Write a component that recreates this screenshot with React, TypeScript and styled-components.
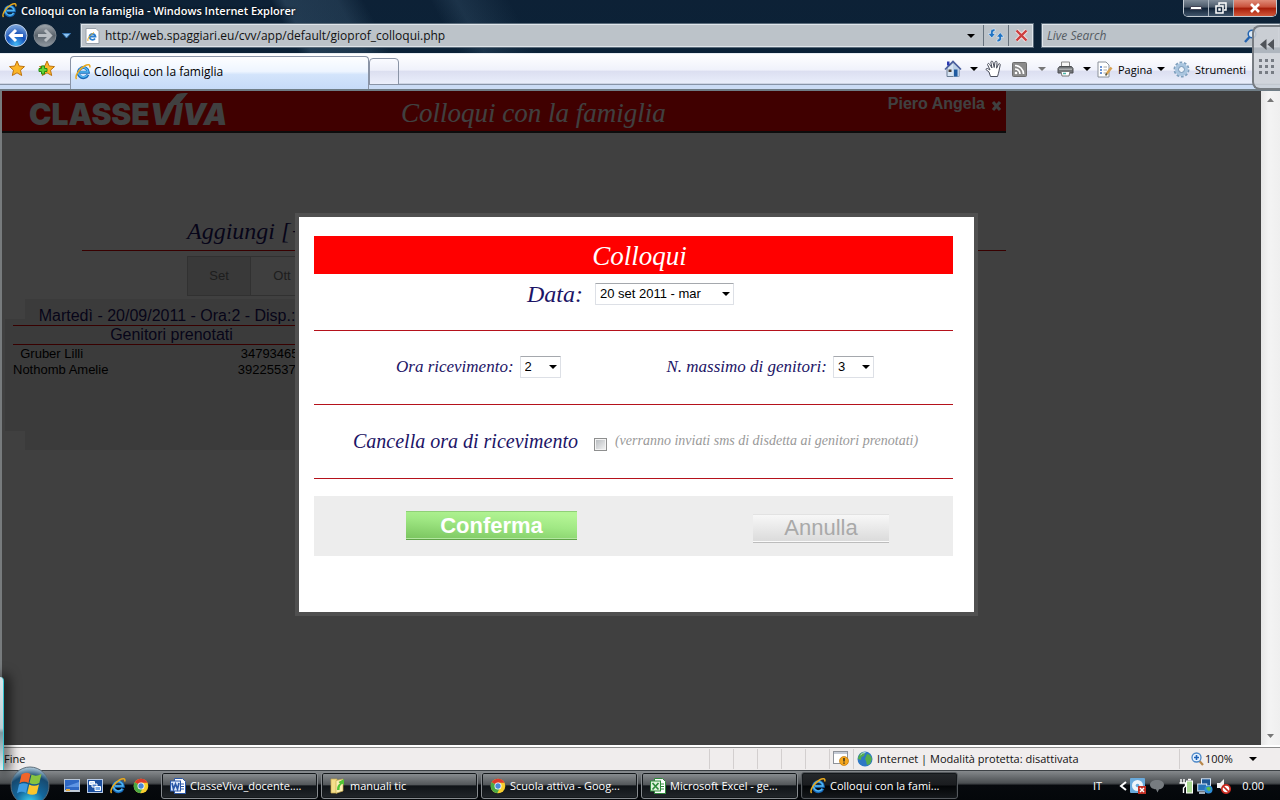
import React from "react";
import styled, { createGlobalStyle } from "styled-components";

const UI = `"Open Sans", "Noto Sans", sans-serif`;
const SANS = `"Liberation Sans", Arial, sans-serif`;
const SCRIPT = `"Monotype Corsiva", "Liberation Serif", serif`;

const GlobalStyle = createGlobalStyle`
  * { box-sizing: border-box; }
  body { margin: 0; background: #404040; font-family: ${UI}; font-size: 11px; overflow: hidden; }
  button, select, input { font: inherit; margin: 0; }
  button { padding: 0; border: 0; background: none; color: inherit; }
  svg { display: block; flex: none; }
  h1, h2, p { margin: 0; font-weight: normal; }
`;

const Desktop = styled.div`
  position: relative;
  display: flex;
  flex-direction: column;
  height: 100vh;
  overflow: hidden;
`;

/* ---------- browser chrome ---------- */

const Chrome = styled.header`
  flex: none;
  background:
    linear-gradient(62deg, transparent 24%, rgba(120, 160, 190, 0.2) 25%, rgba(120, 160, 190, 0.16) 29%, transparent 31%, transparent 36%, rgba(120, 160, 190, 0.14) 38%, transparent 42%),
    linear-gradient(#0d2136, #0a2338);
`;

const TitleBar = styled.div`
  display: flex;
  justify-content: space-between;
  align-items: flex-start;
  height: 22px;
  padding: 0 2px;
  color: #fff;
`;

const WindowTitle = styled.h1`
  display: flex;
  align-items: center;
  gap: 4px;
  height: 20px;
  font-size: 11px;
  font-weight: 600;
  text-shadow: 0 0 3px #000;
`;

const WindowButtons = styled.div`
  display: flex;
  height: 17px;
  margin-right: 1px;
  border: 1px solid #c3cbd3;
  border-top: 0;
  border-radius: 0 0 5px 5px;
  overflow: hidden;
`;

const WindowButton = styled.button<{ $close?: boolean }>`
  display: flex;
  align-items: center;
  justify-content: center;
  width: ${(p) => (p.$close ? 42 : 25)}px;
  border-right: ${(p) => (p.$close ? "0" : "1px solid #aab4be")};
  background: ${(p) =>
    p.$close
      ? "linear-gradient(#e08b78 0%, #c8503a 45%, #a51c08 50%, #d2583a 100%)"
      : "linear-gradient(#7f8b98 0%, #4a5868 45%, #0f2034 50%, #41566c 100%)"};
`;

const NavBar = styled.div`
  display: flex;
  align-items: center;
  gap: 7px;
  height: 31px;
  padding: 0 0 4px 4px;
`;

const NavButtons = styled.div`
  display: flex;
  align-items: center;
  gap: 5px;
  width: 69px;
`;

const Address = styled.div`
  display: flex;
  flex: 1;
  height: 25px;
  border: 1px solid #5a6b7a;
  outline: 1px solid #dfe5ea;
  outline-offset: -2px;
  background: #bcc3c9;
`;

const AddressIcon = styled.span`
  display: flex;
  align-items: center;
  padding-left: 4px;
`;

const TextBox = styled.input<{ $italic?: boolean }>`
  flex: 1;
  min-width: 0;
  padding: 0 5px;
  border: 0;
  outline: 0;
  background: none;
  color: #111;
  font-size: 12px;
  font-style: ${(p) => (p.$italic ? "italic" : "normal")};
  &::placeholder { color: #555c63; opacity: 1; }
`;

const AddressButton = styled.button<{ $line?: boolean }>`
  display: flex;
  align-items: center;
  justify-content: center;
  width: 25px;
  border-left: ${(p) => (p.$line ? "1px solid #66727d" : "0")};
`;

const Search = styled(Address)`
  flex: none;
  width: 239px;
  border-right: 0;
`;

const SearchGlyph = styled.span`
  display: flex;
  align-items: center;
  padding-right: 23px;
`;

const CommandBar = styled.div`
  display: flex;
  height: 38px;
  border-top: 1px solid #e8edf3;
  border-bottom: 2px solid #6f7d86;
  background: linear-gradient(#ffffff 0%, #f0f2fb 45%, #dcdff1 50%, #e9eefb 84%, #8794a8 85%, #8794a8 88%, #cbdcf5 89%);
`;

const Favorites = styled.div`
  display: flex;
  align-items: center;
  gap: 13px;
  width: 70px;
  padding: 0 0 6px 8px;
`;

const Tab = styled.button`
  display: flex;
  align-items: center;
  gap: 3px;
  width: 299px;
  height: 33px;
  margin-top: 2px;
  padding: 0 4px 3px;
  border: 1px solid #8a94a6;
  border-bottom: 0;
  border-radius: 4px 4px 0 0;
  background: linear-gradient(#fdfeff 0%, #eef5ff 45%, #d3e4fb 55%, #c6dbf8 100%);
  color: #000;
  font-size: 12px;
`;

const NewTab = styled.button`
  width: 30px;
  height: 27px;
  margin-top: 4px;
  border: 1px solid #8a94a6;
  border-radius: 4px 4px 0 0;
  background: linear-gradient(#fafbff 0%, #edeff9 45%, #dcdff0 50%, #eceffb 100%);
`;

const Tools = styled.div`
  display: flex;
  align-items: center;
  margin-left: auto;
  padding: 0 34px 5px 0;
`;

const ToolButton = styled.button<{ $width: number }>`
  display: flex;
  align-items: center;
  gap: 5px;
  width: ${(p) => p.$width}px;
  height: 24px;
  white-space: nowrap;
`;

const Gadget = styled.aside`
  position: absolute;
  top: 25px;
  right: 0;
  display: flex;
  flex-direction: column;
  align-items: center;
  gap: 8px;
  width: 28px;
  height: 65px;
  padding-top: 12px;
  border: 2px solid #777c82;
  border-right: 0;
  border-radius: 8px 0 0 8px;
  background: rgba(205, 208, 214, 0.85);
`;

/* ---------- page behind the dialog ---------- */

const Viewport = styled.main`
  position: relative;
  display: flex;
  flex: 1;
  min-height: 0;
  background: #fff;
`;

const Page = styled.div`
  position: relative;
  flex: 1;
  min-width: 0;
  border-left: 2px solid #777b7d;
`;

const ScrollBar = styled.div`
  display: flex;
  flex-direction: column;
  justify-content: space-between;
  align-items: center;
  width: 19px;
  padding: 7px 0;
  background: linear-gradient(90deg, #e6e6e6, #f4f4f4 40%, #efefef);
`;

const Content = styled.div`
  width: 80%;
  max-width: 1004px;
`;

const Banner = styled.div`
  display: flex;
  justify-content: space-between;
  height: 42px;
  border-bottom: 2px solid #333;
  background: #f00;
  color: #fff;
`;

const Logo = styled.div`
  position: relative;
  display: flex;
  align-items: flex-end;
  width: 399px;
  padding-left: 27px;
  font: 900 30px/34px "Inter", ${SANS};
`;

const LogoItalic = styled.span`
  font-style: italic;
`;

const LogoTick = styled.svg`
  position: absolute;
  left: 164px;
  top: 1px;
`;

const BannerTitle = styled.h2`
  flex: 1;
  font: italic 27px/44px ${SCRIPT};
`;

const User = styled.div`
  display: flex;
  gap: 6px;
  padding-right: 4px;
  font: bold 16px/25px ${SANS};
  svg { margin-top: 10px; }
`;

const AddRow = styled.div`
  margin: 80px 0 0 80px;
  padding-left: 105px;
  border-bottom: 1px solid #e00000;
  color: #1c1466;
  font: italic 24px/37px ${SCRIPT};
`;

const Months = styled.div`
  display: flex;
  margin: 5px 0 0 185px;
`;

const Month = styled.button<{ $active?: boolean }>`
  width: 64px;
  height: 40px;
  margin-right: -1px;
  border: 1px solid #c4c4c4;
  background: ${(p) => (p.$active ? "#e2e2e2" : "#fafafa")};
  color: #777;
  font: 13px/16px ${SANS};
`;

const Slot = styled.section`
  width: 360px;
  height: 151px;
  margin: 3px 0 0 3px;
  padding: 8px 0 0 8px;
  background:
    linear-gradient(#ebebeb, #ebebeb) 20px 0 / 100% 100% no-repeat,
    linear-gradient(#ebebeb, #ebebeb) 0 20px / 100% 112px no-repeat;
  color: #1c1466;
`;

const BookingLine = styled.h2`
  width: 317px;
  border-bottom: 1px solid #e00000;
  text-align: center;
  font: 16px/18px ${SANS};
  white-space: nowrap;
`;

const Parents = styled.table`
  width: 300px;
  margin-top: 1px;
  border-collapse: collapse;
  color: #000;
  font: 13px/16px ${SANS};
  td { padding: 0; white-space: pre; }
  td:last-child { text-align: right; }
`;

/* ---------- dialog ---------- */

const Shade = styled.div`
  position: absolute;
  inset: 0;
  display: flex;
  align-items: center;
  justify-content: center;
  padding: 0 0 8px 10px;
  background: rgba(0, 0, 0, 0.75);
`;

const Dialog = styled.form`
  width: 683px;
  padding: 19px 21px 56px 15px;
  border: 4px solid #505050;
  background: #fff;
  color: #1c1466;
`;

const DialogTitle = styled.h2`
  height: 38px;
  padding-left: 12px;
  background: #f00;
  color: #fff;
  text-align: center;
  font: italic 27px/40px ${SCRIPT};
`;

const FormRow = styled.div<{ $height: number }>`
  display: flex;
  justify-content: center;
  height: ${(p) => p.$height}px;
  padding-right: 6px;
  border-bottom: 1px solid #b5121b;
`;

const Field = styled.div<{ $gap?: number }>`
  display: flex;
  align-items: center;
  gap: ${(p) => p.$gap ?? 6}px;
  height: 40px;
`;

const PairRow = styled(FormRow)`
  align-items: center;
  justify-content: space-between;
  padding: 0 79px 0 82px;
`;

const CancelRow = styled(FormRow)`
  align-items: center;
  justify-content: flex-start;
  padding: 0 0 0 39px;
`;

const Label = styled.label<{ $size: number }>`
  font: italic ${(p) => p.$size}px/32px ${SCRIPT};
  white-space: nowrap;
`;

const Note = styled.span`
  color: #999;
  font: italic 14px/32px ${SCRIPT};
  white-space: nowrap;
`;

const SelectBox = styled.span<{ $width: number }>`
  display: grid;
  align-items: center;
  width: ${(p) => p.$width}px;
  > * { grid-area: 1 / 1; }
  > svg { justify-self: end; margin-right: 4px; pointer-events: none; }
`;

const Select = styled.select`
  width: 100%;
  height: 22px;
  padding: 0 4px;
  border: 1px solid #dde0e6;
  border-top-color: #a5a8ad;
  border-radius: 1px;
  appearance: none;
  background: #fff;
  color: #000;
  font: 13px/18px ${SANS};
`;

const Check = styled.input`
  width: 13px;
  height: 13px;
  margin: 6px 0 0 8px;
  appearance: none;
  border: 1px solid #8e8f8f;
  outline: 1px solid #f4f4f4;
  outline-offset: -2px;
  background: linear-gradient(135deg, #b4b8bc, #f6f6f6);
`;

const Actions = styled.div`
  display: flex;
  align-items: center;
  justify-content: space-between;
  height: 60px;
  margin-top: 17px;
  padding: 0 64px 0 92px;
  background: #ededed;
`;

const Action = styled.button<{ $primary?: boolean }>`
  width: ${(p) => (p.$primary ? 171 : 136)}px;
  height: 29px;
  margin-top: ${(p) => (p.$primary ? 0 : 5)}px;
  border-top: 1px solid ${(p) => (p.$primary ? "#8fd077" : "#e2e2e2")};
  border-bottom: 1px solid ${(p) => (p.$primary ? "#5fa348" : "#bcbcbc")};
  box-shadow: inset 0 -1px ${(p) => (p.$primary ? "#b3e8a0" : "#fafafa")};
  background: ${(p) =>
    p.$primary
      ? "linear-gradient(184deg, #b4f595 10%, #a0e884 45%, #79c45e 100%)"
      : "linear-gradient(#f7f7f7, #dadada)"};
  color: ${(p) => (p.$primary ? "#fff" : "#a9a9a9")};
  font: ${(p) => (p.$primary ? "bold" : "normal")} 22px/26px ${SANS};
`;

/* ---------- status bar and task bar ---------- */

const StatusBar = styled.footer`
  display: flex;
  align-items: center;
  flex: none;
  height: 25px;
  padding-left: 4px;
  border-top: 2px solid #fff;
  box-shadow: inset 0 1px #8a8a8a;
  background: #f0eded;
  color: #111;
`;

const StatusText = styled.span`
  flex: 1;
`;

const StatusCell = styled.span<{ $width: number }>`
  display: flex;
  align-items: center;
  gap: 4px;
  width: ${(p) => p.$width}px;
  height: 20px;
  padding-left: 3px;
  border-left: 1px solid #d3cfcf;
  white-space: nowrap;
`;

const ZoomCell = styled(StatusCell)`
  gap: 1px;
  padding: 0 23px 0 11px;
  > svg:last-child { margin-left: auto; }
`;

const TaskBar = styled.nav`
  display: flex;
  align-items: center;
  flex: none;
  height: 30px;
  padding: 0 16px 0 9px;
  border-top: 1px solid #3c4145;
  background: linear-gradient(#85898c 0%, #4a4e51 42%, #06090d 50%, #04070a 100%);
  color: #fff;
`;

const Start = styled.button`
  width: 42px;
  height: 30px;
  svg { margin-top: -5px; }
`;

const Quick = styled.div`
  display: flex;
  align-items: center;
  gap: 7px;
  width: 110px;
  padding-left: 13px;
`;

const Tasks = styled.div`
  display: flex;
  flex: 1;
  gap: 3px;
`;

const Task = styled.button<{ $active?: boolean }>`
  display: flex;
  align-items: center;
  gap: 4px;
  width: 157px;
  height: 27px;
  padding: 0 8px;
  border: 1px solid ${(p) => (p.$active ? "#55595d" : "#868a8e")};
  border-radius: 3px;
  box-shadow: 0 0 0 1px #14181b inset;
  background: ${(p) =>
    p.$active
      ? "linear-gradient(#25282b 0%, #1a1c1f 48%, #030507 52%, #15181b 100%)"
      : "linear-gradient(#8c9093 0%, #55595c 46%, #101418 52%, #22262a 100%)"};
  white-space: nowrap;
`;

const Tray = styled.div`
  display: flex;
  align-items: center;
  gap: 3px;
`;

const TrayGroup = styled(Tray)`
  margin-right: 11px;
`;

const Clock = styled.span`
  width: 30px;
  text-align: right;
`;

const Language = styled.span`
  width: 23px;
`;

const SideSliver = styled.div`
  position: absolute;
  left: 0;
  bottom: 30px;
  width: 4px;
  height: 93px;
  border-right: 1px solid #35c3cf;
  border-radius: 0 4px 0 0;
  background: linear-gradient(#d9e6ea, #bccdd3 55%, #7d979f 60%, #d7eef2);
  box-shadow: 2px 0 12px 3px rgba(0, 0, 0, 0.7);
`;

/* ---------- icons ---------- */

const IE = ({ size = 16 }: { size?: number }) => (
  <svg width={size} height={size} viewBox="0 0 16 16" fill="none">
    <path d="M12.9 10.6A5 5 0 1 1 13.3 8.3H5" stroke="#1668b8" strokeWidth="3" />
    <path d="M12.3 10.8A4.7 4.7 0 1 1 13 8H5" stroke="#53b6f0" strokeWidth="1.5" />
    <path d="M1.6 15C-.7 12.400 4 5 9.500 2 13 0 15.800.4 14.600 3.600" stroke="#e9a91c" strokeWidth="1.500" />
  </svg>
);

const Caret = ({ color = "#000" }: { color?: string }) => (
  <svg width="8" height="4" viewBox="0 0 8 4"><path d="M0 0h8L4 4z" fill={color} /></svg>
);

const Orb = ({ forward }: { forward?: boolean }) => (
  <svg width="24" height="25" viewBox="0 0 24 25">
    <defs>
      <radialGradient id="orbBlue" cx=".5" cy=".9" r=".8">
        <stop offset="0" stopColor="#43b9f5" /><stop offset=".55" stopColor="#1550b8" /><stop offset="1" stopColor="#6e9ad8" />
      </radialGradient>
      <linearGradient id="orbGrey" x1="0" y1="0" x2="0" y2="1">
        <stop offset="0" stopColor="#a3a9af" /><stop offset=".5" stopColor="#5a636c" /><stop offset="1" stopColor="#929aa2" />
      </linearGradient>
    </defs>
    <circle cx="12" cy="12.500" r="11" fill={forward ? "url(#orbGrey)" : "url(#orbBlue)"} stroke={forward ? "#7e8790" : "#c2d4ea"} />
    <path
      d={forward ? "M5 12.500h12M12 7l5.500 5.500L12 18" : "M19 12.500H7M12 7l-5.500 5.500L12 18"}
      stroke={forward ? "#b9bec3" : "#fff"} strokeWidth="3" fill="none"
    />
  </svg>
);

const Star = ({ plus }: { plus?: boolean }) => (
  <svg width="17" height="17" viewBox="0 0 17 17">
    <path d="M9 1l2.200 5 5.300.600-4 3.600 1.200 5.300L9 12.800l-4.700 2.700 1.200-5.300-4-3.600 5.300-.600z" fill="#fbb527" stroke="#bf7410" />
    {plus && <path d="M3.500 6H6.500V8.500H9V11.500H6.500V14H3.500V11.500H1V8.500h2.500z" fill="#62d435" stroke="#258a14" />}
  </svg>
);

const Home = () => (
  <svg width="18" height="18" viewBox="0 0 18 18">
    <path d="M3 8v8.500h12V8L9 2.500z" fill="#d5e3f2" stroke="#6a7d94" />
    <path d="M9 3l6 5v8.500H9z" fill="#bcd0e6" />
    <path d="M1 9.500L9 1.500l8 8" fill="none" stroke="#4a5f9e" strokeWidth="1.700" />
    <path d="M3 1.500h2.500v4H3z" fill="#2c3bb0" />
    <path d="M10 9.500h3.500v7H10z" fill="#1f5aa0" />
    <path d="M4.500 9.500h3V12h-3z" fill="#4a4038" />
  </svg>
);

const Hand = () => (
  <svg width="17" height="18" viewBox="0 0 17 18">
    <path d="M5.500 16.500L4 12 .9 9.500c.3-1.300 1.500-1.400 2.800-.3L5 10 2.500 4.500C3 3 4 3.200 4.500 4.200L7 8 5.800 2C6.500.7 7.500.8 8 2.200L9.200 7.500 10 2c.6-1.100 1.800-1 2 .4l-.4 5.800L13.500 4c.9-.8 1.900-.2 1.700 1L14 11c-.3 2-1 3.500-1.500 5.500z" fill="#fff" stroke="#4b4f5c" />
  </svg>
);

const Feed = () => (
  <svg width="15" height="15" viewBox="0 0 15 15" fill="none">
    <rect x=".5" y=".5" width="14" height="14" rx="1" fill="#8b8b8b" stroke="#6d6d6d" />
    <path d="M3 7a5 5 0 0 1 5 5M3 3.500A8.500 8.500 0 0 1 11.500 12" stroke="#fff" strokeWidth="1.700" />
    <circle cx="4" cy="11" r="1.300" fill="#fff" />
  </svg>
);

const Printer = () => (
  <svg width="17" height="16" viewBox="0 0 17 16">
    <path d="M4.500 1h8v5h-8z" fill="#f7f7f7" stroke="#888" />
    <path d="M2.500 5.500h12l1.500 2v4.500H1V7.500z" fill="#707376" stroke="#4c4f52" />
    <path d="M2 7.500h13V9H2z" fill="#a9acae" />
    <path d="M4 10.500h9l-1 4.500H5z" fill="#fff" stroke="#777" />
    <path d="M6 12.500h3" stroke="#48b2a8" strokeWidth="1.500" />
  </svg>
);

const PageIcon = () => (
  <svg width="16" height="17" viewBox="0 0 16 17">
    <path d="M1 1h8l3 3v12H1z" fill="#fff" stroke="#8a9099" />
    <path d="M3 6h2M3 9h2M3 12h2" stroke="#3c72c8" strokeWidth="1.500" />
    <path d="M6.500 6H10M6.500 9H10M6.500 12H9" stroke="#a8a8a8" />
    <path d="M14.500 6.500L9.500 13" stroke="#d8a250" strokeWidth="2.500" />
    <path d="M9.800 12.500l-1.200 2" stroke="#554" strokeWidth="1.500" />
  </svg>
);

const Gear = () => (
  <svg width="17" height="17" viewBox="0 0 17 17" fill="none">
    <circle cx="8.500" cy="8.500" r="7" stroke="#7e9fbd" strokeWidth="2" strokeDasharray="2.700 1.700" />
    <circle cx="8.500" cy="8.500" r="4.800" stroke="#a9c5df" strokeWidth="3.400" />
    <circle cx="8.500" cy="8.500" r="3" stroke="#6e92b4" fill="#eef3fa" />
  </svg>
);

const Refresh = () => (
  <svg width="16" height="15" viewBox="0 0 16 15" fill="#1f73c2" stroke="#eef4fa" strokeWidth=".6">
    <path d="M2.500 5.500V4C2.500 2 4 .8 7 .8v2.500c-1.300 0-1.900.3-1.900 1.200v1H7.500L3.800 10 0 5.500z" />
    <path d="M13.500 9v1.500c0 2-1.500 3.500-4.500 3.500v-2.500c1.300 0 1.900-.5 1.900-1.400V9H8.500l3.700-4.500L16 9z" />
  </svg>
);

const Stop = () => (
  <svg width="13" height="13" viewBox="0 0 13 13">
    <path d="M1.500 1.500l10 10M11.500 1.500l-10 10" stroke="#f6e4e4" strokeWidth="4" />
    <path d="M1.500 1.500l10 10M11.500 1.500l-10 10" stroke="#cc3f3f" strokeWidth="2.400" />
  </svg>
);

const Lens = ({ plus }: { plus?: boolean }) => (
  <svg width="13" height="14" viewBox="0 0 13 14" fill="none">
    {plus ? (
      <>
        <path d="M8 8.500l4 4.500" stroke="#b8874a" strokeWidth="2.200" />
        <circle cx="5.500" cy="5.500" r="4.500" fill="#e7f3ff" stroke="#4d88c8" strokeWidth="1.300" />
        <path d="M5.500 3v5M3 5.500h5" stroke="#1e62b8" strokeWidth="1.600" />
      </>
    ) : (
      <>
        <path d="M5.500 8L1 13" stroke="#2464b0" strokeWidth="2.400" />
        <circle cx="8" cy="5" r="3.800" fill="#dcebf8" stroke="#2464b0" strokeWidth="1.500" />
      </>
    )}
  </svg>
);

const StartLogo = () => (
  <svg width="42" height="40" viewBox="0 0 42 40">
    <defs>
      <radialGradient id="startOrb" cx=".5" cy=".95" r=".95">
        <stop offset="0" stopColor="#3fd6f5" /><stop offset=".4" stopColor="#14679c" /><stop offset=".75" stopColor="#174a70" /><stop offset="1" stopColor="#b9d2e2" />
      </radialGradient>
    </defs>
    <circle cx="21" cy="20" r="19" fill="url(#startOrb)" stroke="#5c6c78" />
    <path d="M12.500 8.500q4.500-3 9-.5l-2 9q-4.500-2.500-9 .2z" fill="#f0652a" />
    <path d="M22.500 8.500q4.500 2.500 10-.5l-2.200 9q-5 2.500-9.800 0z" fill="#86c440" />
    <path d="M10 18.500q4.500-2.600 9-.2l-2 8.700q-4.500-2.500-9 .3z" fill="#3f9be0" />
    <path d="M20.200 18.500q5 2.500 9.800 0l-2.200 9q-4.500 2.500-9.600 0z" fill="#fbc62c" />
  </svg>
);

const DesktopIcon = () => (
  <svg width="16" height="14" viewBox="0 0 16 14">
    <rect x=".5" y=".5" width="15" height="12" fill="#2f68c4" stroke="#b7c4d4" />
    <path d="M1 8l14-5v5z" fill="#5f95e4" />
    <path d="M1 11h14v1.500H1z" fill="#c5ced8" />
    <path d="M2 10h4v2H2z" fill="#e5ad45" />
  </svg>
);

const SwitchIcon = () => (
  <svg width="16" height="14" viewBox="0 0 16 14">
    <rect x=".5" y=".5" width="15" height="13" fill="#1c4f9e" stroke="#b7c9e4" />
    <path d="M2.500 2.500h5v3h-5z" fill="#cfe2fa" stroke="#fff" />
    <path d="M5 5h5v3H5z" fill="#4c80cc" stroke="#fff" />
    <path d="M8 7.500h5.500v4H8z" fill="#7faee8" stroke="#fff" />
  </svg>
);

const ChromeIcon = () => (
  <svg width="16" height="16" viewBox="0 0 16 16">
    <circle cx="8" cy="8" r="7.300" fill="#f8ce2e" />
    <path d="M8 8L1.700 4.300A7.300 7.300 0 0 1 14.500 4.800H8z" fill="#dc3a2c" />
    <path d="M8 8L1.700 4.300A7.300 7.300 0 0 0 7.200 15.300L10 9.500z" fill="#4aa845" />
    <circle cx="8" cy="8" r="3.500" fill="#fff" />
    <circle cx="8" cy="8" r="2.700" fill="#4a87d8" />
  </svg>
);

const OfficeIcon = ({ kind }: { kind: "W" | "X" }) => {
  const c = kind === "W" ? "#2a57a8" : "#2e8a3a";
  return (
    <svg width="16" height="16" viewBox="0 0 16 16" fill="none">
      <path d="M4.500.5h8l3 3v12h-11z" fill="#fff" stroke={c} />
      <path d="M11 6h3M11 8.500h3M11 11h3" stroke={c} />
      <rect x=".5" y="3" width="10" height="10" fill={kind === "W" ? "#dbe7fb" : "#e0f3dc"} stroke={c} />
      <path d={kind === "W" ? "M2 5l1.500 6L5.500 6l2 5L9 5" : "M2.500 5l6 6.500M8.500 5l-6 6.500"} stroke={c} strokeWidth="1.700" />
    </svg>
  );
};

const FolderIcon = () => (
  <svg width="16" height="17" viewBox="0 0 16 17">
    <path d="M1 2h6v14H1z" fill="#f4df8a" stroke="#c8a94a" strokeWidth=".7" />
    <path d="M6 3.500l7-1.500v12l-7 2.300z" fill="#fbf0b4" stroke="#c8a94a" strokeWidth=".7" />
    <path d="M7 13c0-4 1-5.500 3-6.500L8.500 5 14 2v6l-1.500-1.200C10 8 9.500 10 9.500 13z" fill="#52c436" />
  </svg>
);

const Globe = () => (
  <svg width="16" height="16" viewBox="0 0 16 16">
    <circle cx="8" cy="8" r="7.500" fill="#2e78c4" />
    <path d="M3 3c2-2 4-1.500 5-1L7 5 4.500 6 4 9 1 8c0-2 1-4 2-5zM10 3c3 0 4.500 3 5 5l-2 5-3 1-1-4-1-2z" fill="#55ad4c" />
    <path d="M3.500 4a6 6 0 0 1 5-2.500" stroke="#c4e4fa" fill="none" />
  </svg>
);

const Blocked = () => (
  <svg width="16" height="15" viewBox="0 0 16 15">
    <rect x=".5" y=".5" width="14" height="12" fill="#fff" stroke="#8e9299" />
    <path d="M1 1h13v2H1z" fill="#c5cbd6" />
    <circle cx="11" cy="10" r="4.500" fill="#f5a61d" stroke="#c47a0a" strokeWidth=".7" />
    <path d="M11 7v3.500M11 11.500v1.300" stroke="#332" strokeWidth="1.500" />
  </svg>
);

const DiscIcon = () => (
  <svg width="16" height="16" viewBox="0 0 16 16">
    <rect width="15" height="15" rx="1" fill="#69aadc" />
    <circle cx="7.500" cy="7.500" r="5.500" fill="#edf4fa" />
    <circle cx="7.500" cy="7.500" r="1.800" fill="#69aadc" />
    <path d="M8 8h8v8H8z" fill="#c22f24" />
    <path d="M10 10l4 4M14 10l-4 4" stroke="#fff" strokeWidth="1.500" />
  </svg>
);

const Bubble = () => (
  <svg width="16" height="14" viewBox="0 0 16 14">
    <path d="M8 1c4 0 7 2 7 4.700S12.500 10 10 10.300L8.500 13.500 7 10.300C3.500 10 1 8.300 1 5.700S4 1 8 1z" fill="#777c80" />
  </svg>
);

const Power = () => (
  <svg width="15" height="16" viewBox="0 0 15 16" fill="none">
    <path d="M2 1v4M5 1v4M.5 5h6v3L4.500 10v5" stroke="#fff" strokeWidth="1.400" />
    <rect x="7.500" y="3" width="6" height="12" fill="#a9d992" stroke="#fff" />
    <path d="M9 1.500h3" stroke="#fff" strokeWidth="1.500" />
  </svg>
);

const Network = () => (
  <svg width="16" height="16" viewBox="0 0 16 16">
    <rect x="4.500" y=".8" width="9" height="7" fill="#1d5694" stroke="#d7e6f5" />
    <rect x=".7" y="6" width="9" height="7" fill="#2873b8" stroke="#d7e6f5" />
    <path d="M2 15h6" stroke="#d7e6f5" strokeWidth="1.500" />
    <circle cx="11.500" cy="11.500" r="4" fill="#2f8dd8" />
    <path d="M9 10l3-1.500 2 2-2 3z" fill="#5cc04b" />
  </svg>
);

const Mute = () => (
  <svg width="15" height="16" viewBox="0 0 15 16">
    <path d="M1 5h3l4-4v13l-4-4H1z" fill="#f2f2f2" />
    <circle cx="10" cy="11" r="4.200" fill="#fff" stroke="#c8281e" strokeWidth="1.700" />
    <path d="M7 8l6 6" stroke="#c8281e" strokeWidth="1.700" />
  </svg>
);

/* ---------- page ---------- */

const Dropdown = ({ id, width, options }: { id: string; width: number; options: string[] }) => (
  <SelectBox $width={width}>
    <Select id={id}>{options.map((o) => <option key={o}>{o}</option>)}</Select>
    <Caret />
  </SelectBox>
);

const tasks = [
  { label: "ClasseViva_docente....", icon: <OfficeIcon kind="W" /> },
  { label: "manuali tic", icon: <FolderIcon /> },
  { label: "Scuola attiva - Goog...", icon: <ChromeIcon /> },
  { label: "Microsoft Excel - ge...", icon: <OfficeIcon kind="X" /> },
  { label: "Colloqui con la fami...", icon: <IE />, active: true },
];

export default function App() {
  return (
    <Desktop>
      <GlobalStyle />
      <Chrome>
        <TitleBar>
          <WindowTitle><IE size={15} />Colloqui con la famiglia - Windows Internet Explorer</WindowTitle>
          <WindowButtons>
            <WindowButton aria-label="Riduci"><svg width="12" height="4"><path d="M.5.5h11v3H.5z" fill="#fff" stroke="#445" /></svg></WindowButton>
            <WindowButton aria-label="Ripristina">
              <svg width="12" height="12" viewBox="0 0 12 12" fill="none" stroke="#fff" strokeWidth="1.500"><path d="M4 3V1h7v7H9M1 4h7v7H1zM4 7h1v1H4z" /></svg>
            </WindowButton>
            <WindowButton $close aria-label="Chiudi">
              <svg width="12" height="10" viewBox="0 0 12 10"><path d="M2 1l8 8M10 1L2 9" stroke="#fff" strokeWidth="2.600" /></svg>
            </WindowButton>
          </WindowButtons>
        </TitleBar>
        <NavBar>
          <NavButtons>
            <button aria-label="Indietro"><Orb /></button>
            <button aria-label="Avanti"><Orb forward /></button>
            <button aria-label="Pagine recenti"><svg width="9" height="6"><path d="M.5.5h8L4.500 5z" fill="#8cc2ee" stroke="#3a78b4" /></svg></button>
          </NavButtons>
          <Address>
            <AddressIcon>
              <svg width="15" height="16" viewBox="0 0 15 16"><path d="M1 .5h10l3 3v12H1z" fill="#fff" stroke="#99a2ab" /><path d="M10 10.500a3 3 0 1 1 .5-2H5" stroke="#2b7fcf" strokeWidth="1.800" fill="none" /><path d="M3 13c-1-2 2-6 6-8.500" stroke="#e9a91c" fill="none" /></svg>
            </AddressIcon>
            <TextBox aria-label="Indirizzo" defaultValue="http://web.spaggiari.eu/cvv/app/default/gioprof_colloqui.php" />
            <AddressButton aria-label="Mostra indirizzi"><Caret /></AddressButton>
            <AddressButton $line aria-label="Aggiorna"><Refresh /></AddressButton>
            <AddressButton $line aria-label="Interrompi"><Stop /></AddressButton>
          </Address>
          <Search>
            <TextBox $italic aria-label="Cerca" placeholder="Live Search" />
            <SearchGlyph><Lens /></SearchGlyph>
          </Search>
        </NavBar>
        <CommandBar>
          <Favorites>
            <button aria-label="Preferiti"><Star /></button>
            <button aria-label="Aggiungi a Preferiti"><Star plus /></button>
          </Favorites>
          <Tab><IE />Colloqui con la famiglia</Tab>
          <NewTab aria-label="Nuova scheda" />
          <Tools>
            <ToolButton $width={26} aria-label="Pagina iniziale"><Home /></ToolButton>
            <ToolButton $width={15} aria-label="Menu pagina iniziale"><Caret /></ToolButton>
            <ToolButton $width={27} aria-label="Panoramica"><Hand /></ToolButton>
            <ToolButton $width={26} aria-label="Feed"><Feed /></ToolButton>
            <ToolButton $width={19} aria-label="Menu feed"><Caret color="#777" /></ToolButton>
            <ToolButton $width={26} aria-label="Stampa"><Printer /></ToolButton>
            <ToolButton $width={14} aria-label="Menu stampa"><Caret /></ToolButton>
            <ToolButton $width={76}><PageIcon />Pagina<Caret /></ToolButton>
            <ToolButton $width={73}><Gear />Strumenti</ToolButton>
          </Tools>
        </CommandBar>
      </Chrome>

      <Viewport>
        <Page>
          <Content>
            <Banner>
              <Logo>
                CLASSE<LogoItalic>VIVA</LogoItalic>
                <LogoTick width="22" height="14" viewBox="0 0 22 14"><path d="M2 13L11 2q5-1.500 11-1L12 13z" fill="#fff" /></LogoTick>
              </Logo>
              <BannerTitle>Colloqui con la famiglia</BannerTitle>
              <User>
                Piero Angela
                <svg width="11" height="10" viewBox="0 0 11 10"><path d="M2 1l7 8M9 1L2 9" stroke="#fff" strokeWidth="3" /></svg>
              </User>
            </Banner>
            <AddRow>Aggiungi [+]</AddRow>
            <Months>
              <Month $active>Set</Month>
              <Month>Ott</Month>
            </Months>
            <Slot>
              <BookingLine>Martedì - 20/09/2011 - Ora:2 - Disp.:3</BookingLine>
              <BookingLine>Genitori prenotati</BookingLine>
              <Parents>
                <tbody>
                  <tr><td>{"\u00a0 Gruber Lilli"}</td><td>3479346565</td></tr>
                  <tr><td>Nothomb Amelie</td><td>39225537XX</td></tr>
                </tbody>
              </Parents>
            </Slot>
          </Content>
          <Shade>
            <Dialog onSubmit={(e) => e.preventDefault()}>
              <DialogTitle>Colloqui</DialogTitle>
              <FormRow $height={57}>
                <Field $gap={12}>
                  <Label $size={24} htmlFor="data">Data:</Label>
                  <Dropdown id="data" width={139} options={["20 set 2011 - mar"]} />
                </Field>
              </FormRow>
              <PairRow $height={74}>
                <Field>
                  <Label $size={17} htmlFor="ora">Ora ricevimento:</Label>
                  <Dropdown id="ora" width={41} options={["2"]} />
                </Field>
                <Field>
                  <Label $size={17} htmlFor="max">N. massimo di genitori:</Label>
                  <Dropdown id="max" width={41} options={["3"]} />
                </Field>
              </PairRow>
              <CancelRow $height={74}>
                <Field $gap={8}>
                  <Label $size={20} htmlFor="cancella">Cancella ora di ricevimento</Label>
                  <Check id="cancella" type="checkbox" />
                  <Note>(verranno inviati sms di disdetta ai genitori prenotati)</Note>
                </Field>
              </CancelRow>
              <Actions>
                <Action $primary type="submit">Conferma</Action>
                <Action type="button">Annulla</Action>
              </Actions>
            </Dialog>
          </Shade>
        </Page>
        <ScrollBar>
          <svg width="7" height="4"><path d="M0 4h7L3.500 0z" fill="#777" /></svg>
          <svg width="7" height="4"><path d="M0 0h7L3.500 4z" fill="#777" /></svg>
        </ScrollBar>
      </Viewport>

      <StatusBar>
        <StatusText>Fine</StatusText>
        <StatusCell $width={24} /><StatusCell $width={24} /><StatusCell $width={24} /><StatusCell $width={24} /><StatusCell $width={24} />
        <StatusCell $width={24}><Blocked /></StatusCell>
        <StatusCell $width={326}><Globe />Internet | Modalità protetta: disattivata</StatusCell>
        <ZoomCell $width={101}><Lens plus />100%<Caret /></ZoomCell>
      </StatusBar>

      <TaskBar>
        <Start aria-label="Start"><StartLogo /></Start>
        <Quick><DesktopIcon /><SwitchIcon /><IE /><ChromeIcon /></Quick>
        <Tasks>
          {tasks.map((t) => (
            <Task key={t.label} $active={t.active}>{t.icon}{t.label}</Task>
          ))}
        </Tasks>
        <Tray>
          <TrayGroup>
            <Language>IT</Language>
            <svg width="8" height="10" viewBox="0 0 8 10"><path d="M7 1L2 5l5 4" stroke="#fff" strokeWidth="2" fill="none" /></svg>
            <DiscIcon /><Bubble />
          </TrayGroup>
          <Power /><Network /><Mute />
          <Clock>0.00</Clock>
        </Tray>
      </TaskBar>

      <SideSliver />
      <Gadget>
        <svg width="14" height="11" viewBox="0 0 14 11"><path d="M6.500 0v11L0 5.500zM14 0v11L7.500 5.500z" fill="#50545a" /></svg>
        <svg width="16" height="18" viewBox="0 0 16 18" fill="#777c84">
          {[0, 6, 12].map((y) => [0, 6, 12].map((x) => <rect key={`${x}-${y}`} x={x} y={y + 1} width="3" height="3" />))}
        </svg>
      </Gadget>
    </Desktop>
  );
}
